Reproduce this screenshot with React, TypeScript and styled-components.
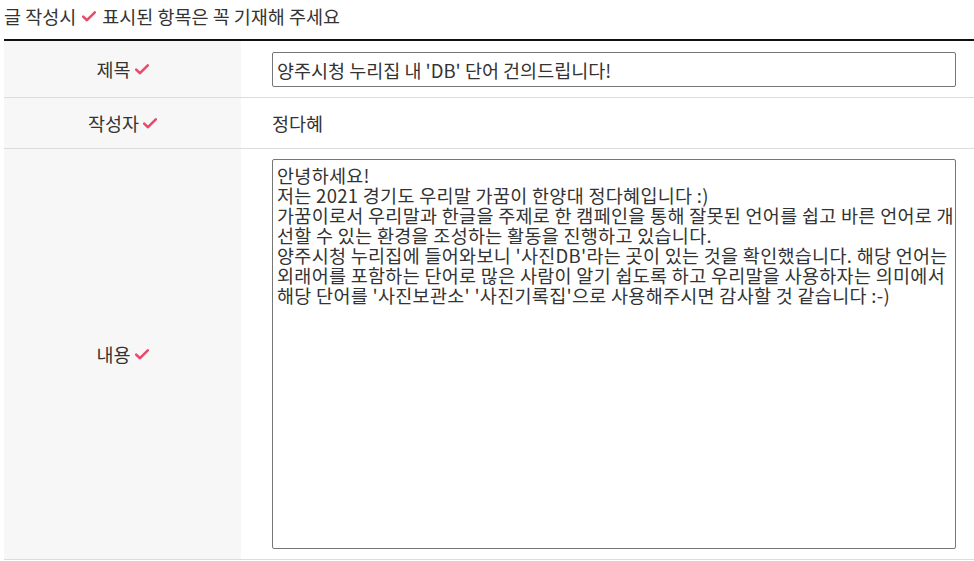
import { useState } from "react";
import styled, { createGlobalStyle } from "styled-components";

const GlobalStyle = createGlobalStyle`
  html, body {
    margin: 0;
    padding: 0;
    background: #fff;
  }
  body {
    font-family: "Noto Sans CJK KR", "Noto Sans", sans-serif;
    color: #333;
    font-size: 18.5px;
  }
`;

const Page = styled.div`
  width: 970px;
  padding-left: 4px;
`;

const Notice = styled.p`
  margin: 0 0 11px;
  padding-top: 4px;
  line-height: 24px;
  display: flex;
  align-items: center;
  gap: 6px;
  white-space: nowrap;
`;

const Table = styled.div`
  border-top: 2px solid #111;
  display: flex;
  flex-direction: column;
`;

const Row = styled.div<{ $min: number }>`
  display: flex;
  min-height: ${(p) => p.$min}px;
  border-bottom: 1px solid #dcdcdc;
`;

const Label = styled.div`
  width: 237px;
  flex-shrink: 0;
  background: #f7f7f7;
  display: flex;
  align-items: center;
  justify-content: center;
  gap: 4px;
  line-height: 24px;
`;

const Cell = styled.div<{ $pt: number; $pb: number }>`
  flex: 1;
  display: flex;
  align-items: center;
  padding: ${(p) => p.$pt}px 18px ${(p) => p.$pb}px 31px;
  line-height: 24px;
`;

const TitleInput = styled.input`
  width: 100%;
  height: 35px;
  box-sizing: border-box;
  border: 1px solid #767676;
  border-radius: 2px;
  padding: 0 4px;
  font: inherit;
  color: #333;
  outline: none;
`;

const Body = styled.textarea`
  width: 100%;
  height: 390px;
  box-sizing: border-box;
  border: 1px solid #767676;
  border-radius: 2px;
  padding: 5px 0 5px 4px;
  font: inherit;
  line-height: 20px;
  letter-spacing: 0.3px;
  color: #333;
  resize: none;
  outline: none;
  overflow: hidden;
`;

const Check = () => (
  <svg width="14" height="11" viewBox="0 0 14 11" aria-hidden="true">
    <path
      d="M1.2 5.6 L5 9.2 L12.8 1.4"
      fill="none"
      stroke="#ea4a6c"
      strokeWidth="2.6"
      strokeLinecap="round"
      strokeLinejoin="round"
    />
  </svg>
);

// line breaks follow the wrapping of the original textarea
const initialBody = [
  "안녕하세요!",
  "저는 2021 경기도 우리말 가꿈이 한양대 정다혜입니다 :)",
  "가꿈이로서 우리말과 한글을 주제로 한 캠페인을 통해 잘못된 언어를 쉽고 바른 언어로 개",
  "선할 수 있는 환경을 조성하는 활동을 진행하고 있습니다.",
  "양주시청 누리집에 들어와보니 '사진DB'라는 곳이 있는 것을 확인했습니다. 해당 언어는",
  "외래어를 포함하는 단어로 많은 사람이 알기 쉽도록 하고 우리말을 사용하자는 의미에서",
  "해당 단어를 '사진보관소' '사진기록집'으로 사용해주시면 감사할 것 같습니다 :-)",
].join("\n");

export default function App() {
  const [title, setTitle] = useState("양주시청 누리집 내 'DB' 단어 건의드립니다!");
  const [body, setBody] = useState(initialBody);

  return (
    <>
      <GlobalStyle />
      <Page>
        <Notice>
          글 작성시 <Check /> 표시된 항목은 꼭 기재해 주세요
        </Notice>
        <Table>
          <Row $min={56}>
            <Label>
              제목 <Check />
            </Label>
            <Cell $pt={11} $pb={10}>
              <TitleInput value={title} onChange={(e) => setTitle(e.target.value)} />
            </Cell>
          </Row>
          <Row $min={50}>
            <Label>
              작성자 <Check />
            </Label>
            <Cell $pt={0} $pb={0}>정다혜</Cell>
          </Row>
          <Row $min={410}>
            <Label>
              내용 <Check />
            </Label>
            <Cell $pt={10} $pb={10}>
              <Body value={body} onChange={(e) => setBody(e.target.value)} />
            </Cell>
          </Row>
        </Table>
      </Page>
    </>
  );
}
